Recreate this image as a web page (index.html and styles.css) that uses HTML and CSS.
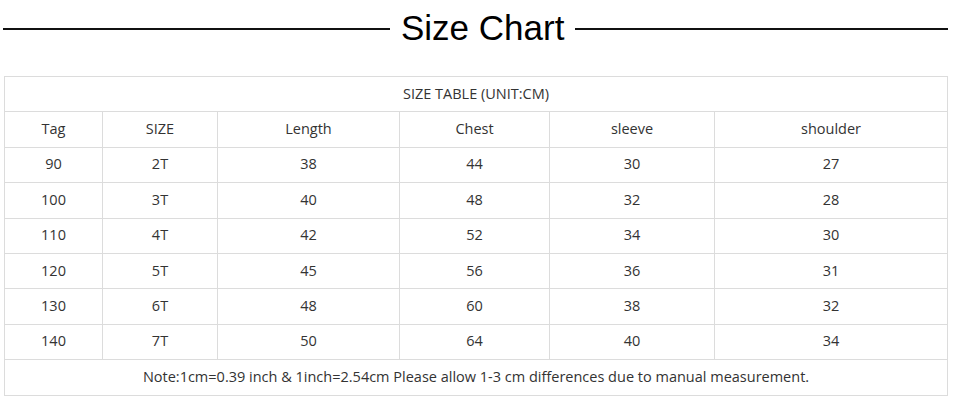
FILE: index.html
```html
<!DOCTYPE html>
<html>
<head>
<meta charset="utf-8">
<link rel="stylesheet" href="styles.css">
</head>
<body>
<div class="page">
  <div class="heading">
    <span class="rule rule-left"></span>
    <h1 class="title">Size Chart</h1>
    <span class="rule"></span>
  </div>
  <table class="chart">
    <colgroup>
      <col class="c1"><col class="c2"><col class="c3"><col class="c4"><col class="c5"><col class="c6">
    </colgroup>
    <tr><td colspan="6">SIZE TABLE (UNIT:CM)</td></tr>
    <tr><td>Tag</td><td>SIZE</td><td>Length</td><td>Chest</td><td>sleeve</td><td>shoulder</td></tr>
    <tr><td>90</td><td>2T</td><td>38</td><td>44</td><td>30</td><td>27</td></tr>
    <tr><td>100</td><td>3T</td><td>40</td><td>48</td><td>32</td><td>28</td></tr>
    <tr><td>110</td><td>4T</td><td>42</td><td>52</td><td>34</td><td>30</td></tr>
    <tr><td>120</td><td>5T</td><td>45</td><td>56</td><td>36</td><td>31</td></tr>
    <tr><td>130</td><td>6T</td><td>48</td><td>60</td><td>38</td><td>32</td></tr>
    <tr><td>140</td><td>7T</td><td>50</td><td>64</td><td>40</td><td>34</td></tr>
    <tr><td colspan="6">Note:1cm=0.39 inch &amp; 1inch=2.54cm Please allow 1-3 cm differences due to manual measurement.</td></tr>
  </table>
</div>
</body>
</html>
```
FILE: styles.css
```css
html, body {
  margin: 0;
  padding: 0;
  background: #fff;
}
.page {
  padding: 8px 6px 0 3px;
}
.heading {
  display: flex;
  align-items: center;
  gap: 11px;
  height: 40px;
}
.rule {
  flex: 1;
  height: 1.5px;
  background: #111;
  margin-top: 2px;
}
.rule-left {
  flex: 0 0 387px;
}
.title {
  margin: 0;
  font-family: "Liberation Sans", Arial, sans-serif;
  font-weight: normal;
  font-size: 35px;
  line-height: 40px;
  color: #000;
}
.chart {
  margin: 28px 0 0 1px;
  width: 943px;
  table-layout: fixed;
  border-collapse: collapse;
  font-family: "Open Sans", "Noto Sans", sans-serif;
  font-size: 14.5px;
  color: #333;
}
.chart td {
  border: 1px solid #dcdcdc;
  height: 32.4px;
  padding: 0 0 2px;
  text-align: center;
  vertical-align: middle;
}
.c1 { width: 98px; }
.c2 { width: 115px; }
.c3 { width: 182px; }
.c4 { width: 150px; }
.c5 { width: 165px; }
.c6 { width: 233px; }
```
